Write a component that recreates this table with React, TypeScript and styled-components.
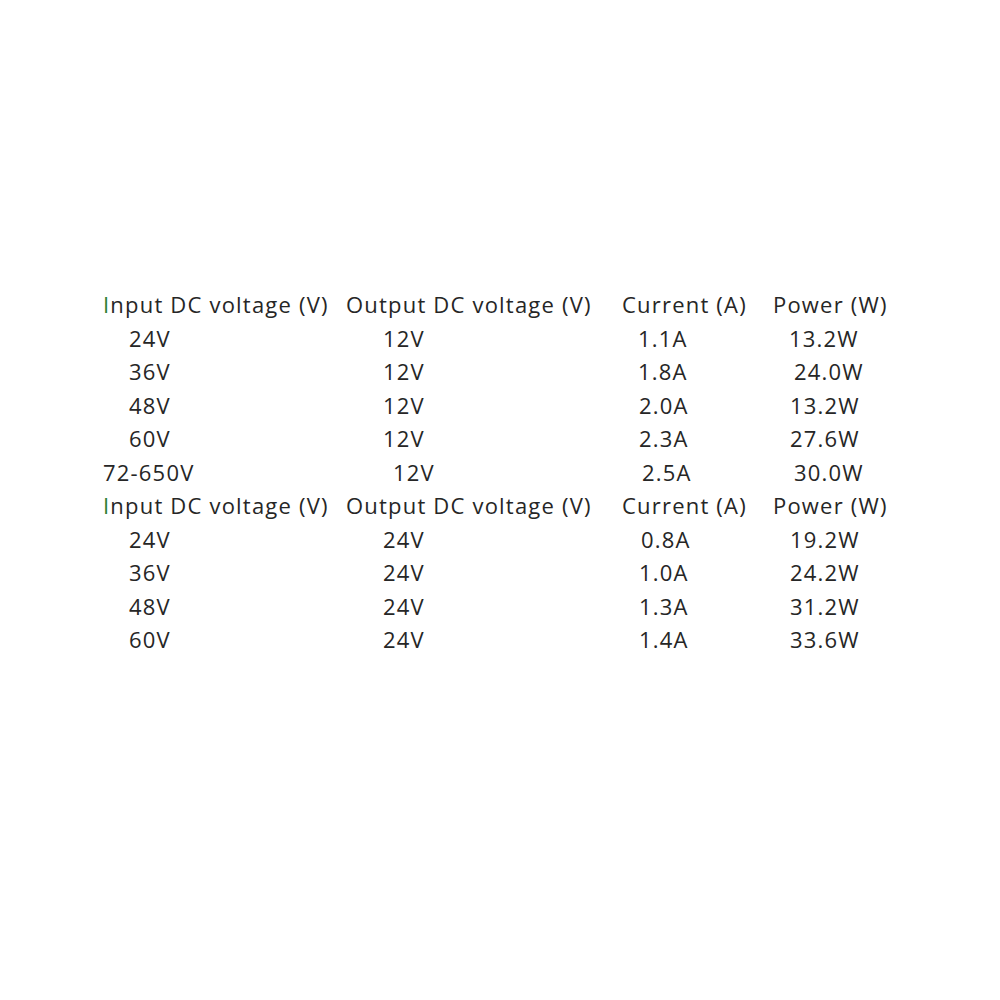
import styled, { createGlobalStyle } from 'styled-components';

interface Row {
    input: string;
    output: string;
    current: string;
    power: string;
    indents: [number, number, number, number];
}

const firstTable: Row[] = [
    { input: '24V', output: '12V', current: '1.1A', power: '13.2W', indents: [26, 37, 16, 16] },
    { input: '36V', output: '12V', current: '1.8A', power: '24.0W', indents: [26, 37, 16, 21] },
    { input: '48V', output: '12V', current: '2.0A', power: '13.2W', indents: [26, 37, 17, 17] },
    { input: '60V', output: '12V', current: '2.3A', power: '27.6W', indents: [26, 37, 17, 17] },
    { input: '72-650V', output: '12V', current: '2.5A', power: '30.0W', indents: [0, 47, 20, 21] },
];

const secondTable: Row[] = [
    { input: '24V', output: '24V', current: '0.8A', power: '19.2W', indents: [26, 37, 19, 17] },
    { input: '36V', output: '24V', current: '1.0A', power: '24.2W', indents: [26, 37, 17, 17] },
    { input: '48V', output: '24V', current: '1.3A', power: '31.2W', indents: [26, 37, 17, 17] },
    { input: '60V', output: '24V', current: '1.4A', power: '33.6W', indents: [26, 37, 17, 17] },
];

const HeaderRow = () => (
    <Line>
        <Cell>
            <GreenI>I</GreenI>nput DC voltage (V)
        </Cell>
        <Cell>Output DC voltage (V)</Cell>
        <Cell>Current (A)</Cell>
        <Cell>Power (W)</Cell>
    </Line>
);

const DataRows = ({ rows }: { rows: Row[] }) => (
    <>
        {rows.map((row, i) => (
            <Line key={i}>
                <Cell $indent={row.indents[0]}>{row.input}</Cell>
                <Cell $indent={row.indents[1]}>{row.output}</Cell>
                <Cell $indent={row.indents[2]}>{row.current}</Cell>
                <Cell $indent={row.indents[3]}>{row.power}</Cell>
            </Line>
        ))}
    </>
);

const App = () => (
    <>
        <GlobalStyle />
        <Page>
            <Table>
                <HeaderRow />
                <DataRows rows={firstTable} />
                <HeaderRow />
                <DataRows rows={secondTable} />
            </Table>
        </Page>
    </>
);

const GlobalStyle = createGlobalStyle`
    html, body {
        margin: 0;
        padding: 0;
        background: #ffffff;
    }
    body {
        font-family: 'Open Sans', 'Noto Sans', sans-serif;
        color: #262626;
    }
`;

const Page = styled.div`
    width: 1000px;
    height: 1000px;
    padding: 288px 0 0 103px;
    box-sizing: border-box;
`;

const Table = styled.div`
    display: flex;
    flex-direction: column;
`;

const Line = styled.div`
    display: grid;
    grid-template-columns: 243px 276px 151px 130px;
    height: 33.5px;
    align-items: center;
    font-size: 22px;
    font-weight: 400;
    letter-spacing: 1.2px;
    white-space: nowrap;
`;

const Cell = styled.div<{ $indent?: number }>`
    padding-left: ${(p) => p.$indent ?? 0}px;
    line-height: 33.5px;
`;

const GreenI = styled.span`
    color: #2e7d32;
`;

export default App;
